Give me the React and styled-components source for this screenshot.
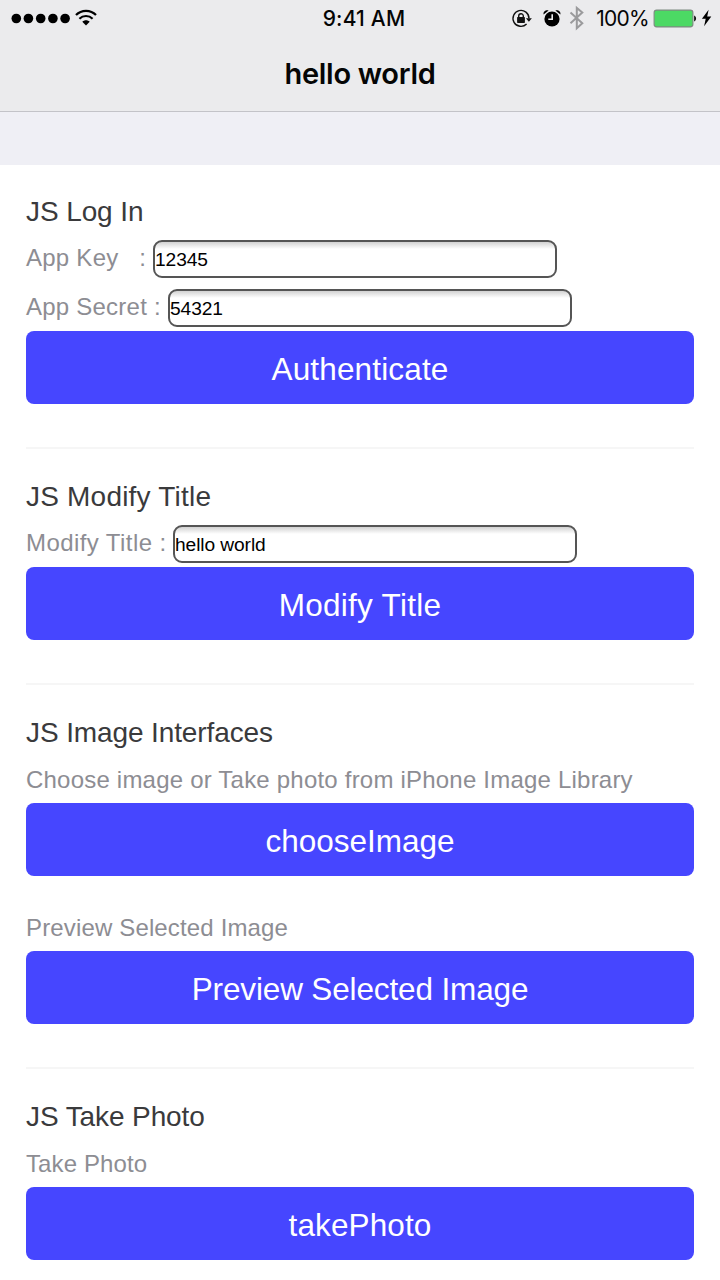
import React from 'react';
import styled, { createGlobalStyle } from 'styled-components';

const GlobalStyle = createGlobalStyle`
  * { box-sizing: border-box; }
  body { margin: 0; background: #fff; font-family: "Liberation Sans", Helvetica, Arial, sans-serif; }
`;

const Screen = styled.div`
  width: 720px;
  height: 1280px;
  overflow: hidden;
  background: #fff;
`;

const Header = styled.header`
  height: 112px;
  background: #ebebed;
  border-bottom: 1px solid #c3c3c8;
  font-family: Inter, sans-serif;
  color: #050505;
`;

const StatusBar = styled.div`
  display: grid;
  grid-template-columns: 1fr auto 1fr;
  align-items: center;
  height: 36px;
  padding: 0 8px 0 11px;
`;

const StatusGroup = styled.div`
  display: flex;
  align-items: center;
  justify-content: ${(p) => (p.$end ? 'flex-end' : 'flex-start')};
`;

const Clock = styled.div`
  font-size: 21px;
  font-weight: 500;
  line-height: 36px;
  letter-spacing: 0.2px;
  padding: 1px 0 0 5px;
`;

const Percent = styled.span`
  font-size: 21px;
  line-height: 36px;
  letter-spacing: -0.7px;
  padding-top: 1px;
  margin: 0 5px 0 12px;
`;

const Icon = styled.svg`
  display: block;
  flex: none;
  overflow: visible;
  margin-left: ${(p) => p.$gap || 0}px;
`;

const NavTitle = styled.h1`
  margin: 0;
  text-align: center;
  font-size: 29px;
  font-weight: 600;
  line-height: 75px;
  letter-spacing: -0.3px;
`;

const Spacer = styled.div`
  height: 53px;
  background: #efeff5;
`;

const Content = styled.main`
  padding: 0 26px;
`;

const Section = styled.section`
  padding: ${(p) => (p.$first ? 23 : 24)}px 0 43px;
  border-bottom: 2px solid #f6f6f6;
`;

const Heading = styled.h2`
  margin: 0;
  height: 48px;
  line-height: 47px;
  font-size: 28px;
  font-weight: 400;
  letter-spacing: ${(p) => p.$spacing || 0}px;
  color: #3a3a3c;
`;

const Row = styled.div`
  display: flex;
  align-items: center;
  height: 46px;
  margin-top: ${(p) => p.$gap || 0}px;
`;

const Label = styled.label`
  flex: none;
  width: ${(p) => (p.$width ? p.$width + 'px' : 'auto')};
  padding-bottom: ${(p) => (p.$width ? 3 : 2)}px;
  font-size: 24px;
  line-height: 43px;
  letter-spacing: ${(p) => p.$spacing || 0}px;
  white-space: pre;
  color: #8d8d93;
`;

const Input = styled.input`
  width: 404px;
  height: 38px;
  padding: 1px 0 0 0;
  border: 2px solid #555;
  border-radius: 9px;
  outline: none;
  background: linear-gradient(#d2d2d2, #fff 7px);
  font: 19.2px "Liberation Sans", Helvetica, Arial, sans-serif;
  letter-spacing: -0.1px;
  color: #000;
`;

const Button = styled.button`
  display: block;
  width: 100%;
  height: 73px;
  padding: 3px 0 0;
  border: 0;
  border-radius: 8px;
  background: #4646ff;
  font: 31.5px "Liberation Sans", Helvetica, Arial, sans-serif;
  letter-spacing: ${(p) => p.$spacing || 0}px;
  color: #fff;
`;

function SignalDots() {
  return (
    <Icon width="60" height="12" viewBox="0 0 60 12" fill="#000">
      {[5.3, 17.4, 29.7, 41.9, 54.1].map((x) => (
        <circle key={x} cx={x} cy="5.5" r="4.8" />
      ))}
    </Icon>
  );
}

function Wifi() {
  return (
    <Icon $gap={4} width="22" height="18" viewBox="0 1.5 22 18" fill="none" stroke="#000" strokeWidth="2.2">
      <path d="M1 6.6C6.4 0.9 15.6 0.9 21 6.6" />
      <path d="M4.4 10.2c3.7-3.6 9.5-3.6 13.2 0" />
      <path d="M7.3 13.2c2.1-2 5.3-2 7.4 0L11 17z" fill="#000" stroke="none" />
    </Icon>
  );
}

function RotationLock() {
  return (
    <Icon width="20" height="18" viewBox="0 0.5 20 18" fill="none" stroke="#111" strokeWidth="1.4">
      <path d="M14.6 14.6A8 8 0 1 1 17 9" />
      <path d="M13.9 8.7h6l-3 3.6z" fill="#111" stroke="none" />
      <rect x="5.1" y="7.6" width="7.8" height="5.8" rx="0.6" fill="#111" stroke="none" />
      <path d="M6.7 8.2V6.5a2.3 2.3 0 0 1 4.6 0v1.7" />
    </Icon>
  );
}

function Alarm() {
  return (
    <Icon $gap={11} width="18" height="18" viewBox="0 0.8 18 18" fill="#000">
      <circle cx="9" cy="9.8" r="7.6" />
      <path d="M0.6 5.4C0 2.4 2.6.6 5.6 1.3zM17.4 5.4C18 2.4 15.4.6 12.4 1.3z" />
      <path d="M9.2 5v5H5.3" fill="none" stroke="#ebebed" strokeWidth="1.6" />
    </Icon>
  );
}

function Bluetooth() {
  return (
    <Icon $gap={8} width="15" height="24" viewBox="0 1.2 15 24" fill="none" stroke="#9a9a9c" strokeWidth="2">
      <path d="M1.5 6.6l11.8 10.8-5.5 5V2.1l5.5 4.7L1.5 17.5" />
    </Icon>
  );
}

function Battery() {
  return (
    <Icon width="43" height="18" viewBox="0.5 0.5 43 18">
      <rect x="0.6" y="0.6" width="38.8" height="16.8" rx="2.6" fill="#4cd964" stroke="#7d8a80" strokeWidth="1.1" />
      <path d="M40.6 6c2.6.8 2.6 5.2 0 6z" fill="#111" />
    </Icon>
  );
}

function Bolt() {
  return (
    <Icon $gap={5} width="10" height="17" viewBox="0.4 0.8 10 17" fill="#000">
      <path d="M7 0.5L0.3 9.5h3.8L2.5 17l7.2-9.8H5.6z" />
    </Icon>
  );
}

function Field({ label, width, value, gap, spacing }) {
  return (
    <Row $gap={gap}>
      <Label $width={width} $spacing={spacing}>{label}</Label>
      <Input defaultValue={value} />
    </Row>
  );
}

function Action({ note, title, gap, noteSpacing, titleSpacing }) {
  return (
    <>
      <Row $gap={gap}>
        <Label $spacing={noteSpacing}>{note}</Label>
      </Row>
      <Button $spacing={titleSpacing}>{title}</Button>
    </>
  );
}

export default function App() {
  return (
    <Screen>
      <GlobalStyle />
      <Header>
        <StatusBar>
          <StatusGroup>
            <SignalDots />
            <Wifi />
          </StatusGroup>
          <Clock>9:41 AM</Clock>
          <StatusGroup $end>
            <RotationLock />
            <Alarm />
            <Bluetooth />
            <Percent>100%</Percent>
            <Battery />
            <Bolt />
          </StatusGroup>
        </StatusBar>
        <NavTitle>hello world</NavTitle>
      </Header>
      <Spacer />
      <Content>
        <Section $first>
          <Heading $spacing={-0.1}>JS Log In</Heading>
          <Field label="App Key   :" width={127} value="12345" spacing={0.25} />
          <Field label="App Secret :" width={142} value="54321" gap={3} spacing={0.23} />
          <Button $spacing={0.15}>Authenticate</Button>
        </Section>
        <Section>
          <Heading $spacing={0.21}>JS Modify Title</Heading>
          <Field label="Modify Title :" width={147} value="hello world" spacing={0.42} />
          <Button $spacing={0.27}>Modify Title</Button>
        </Section>
        <Section>
          <Heading $spacing={-0.11}>JS Image Interfaces</Heading>
          <Action
            note="Choose image or Take photo from iPhone Image Library"
            noteSpacing={0.21}
            title="chooseImage"
          />
          <Action
            note="Preview Selected Image"
            noteSpacing={0.15}
            title="Preview Selected Image"
            titleSpacing={-0.14}
            gap={29}
          />
        </Section>
        <Section>
          <Heading $spacing={-0.1}>JS Take Photo</Heading>
          <Action note="Take Photo" noteSpacing={0.12} title="takePhoto" titleSpacing={0.1} />
        </Section>
      </Content>
    </Screen>
  );
}
